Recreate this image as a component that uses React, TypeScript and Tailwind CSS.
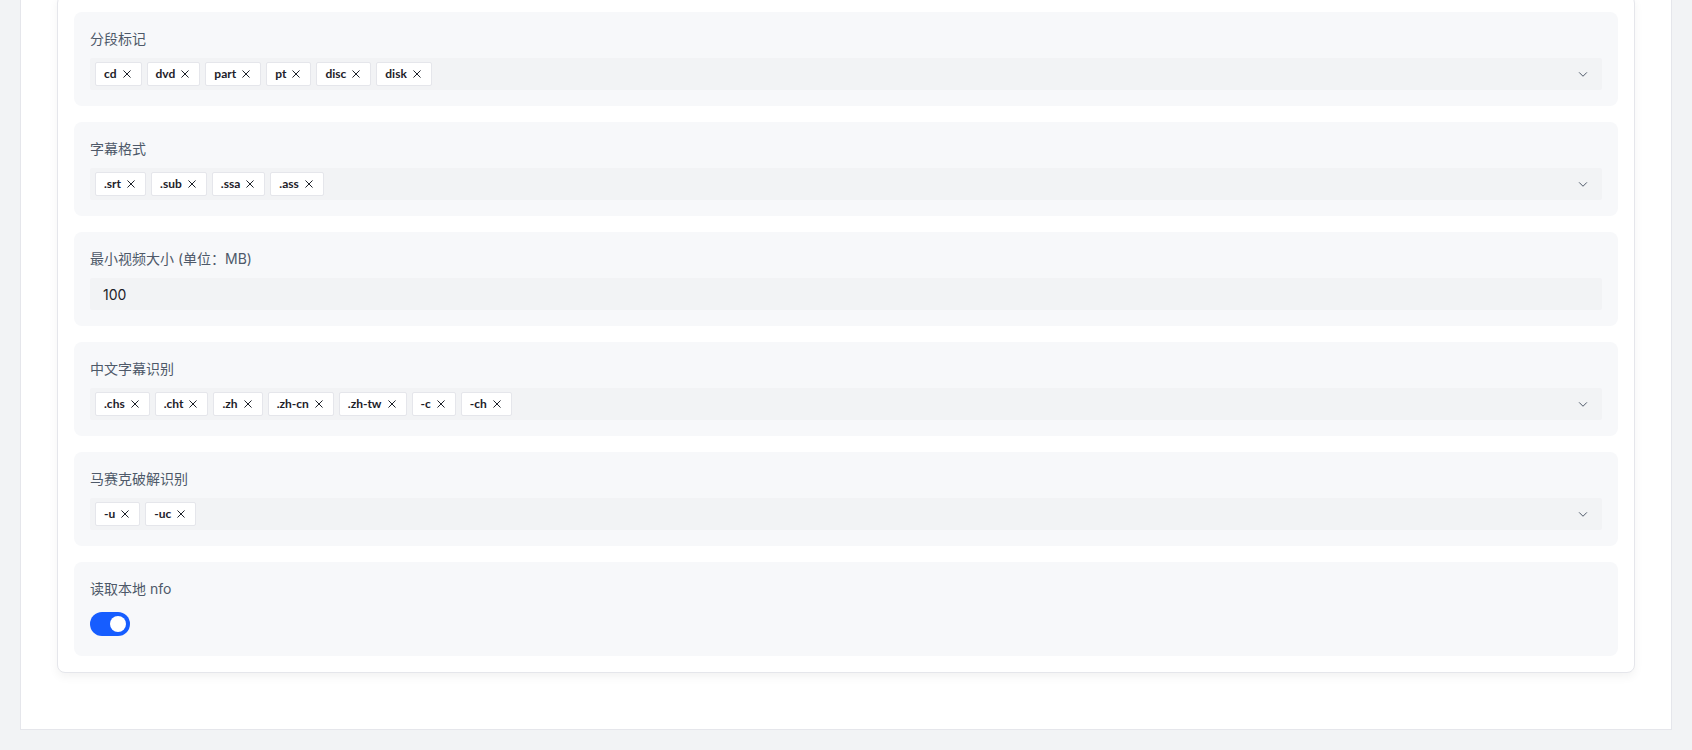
import React from "react";

const FONT = {
  fontFamily:
    '"Inter", "Noto Sans CJK SC", "Noto Sans", "Liberation Sans", sans-serif',
};

const TAG_FONT = {
  fontFamily: '"Lato", "Inter", "Noto Sans CJK SC", sans-serif',
};

function XIcon() {
  return (
    <svg width="12" height="12" viewBox="0 0 48 48" fill="none" stroke="currentColor" strokeWidth="4" strokeLinecap="butt">
      <path d="M9.857 9.858 24 24m0 0 14.142 14.142M24 24 38.142 9.858M24 24 9.857 38.142" />
    </svg>
  );
}

function DownIcon() {
  return (
    <svg width="12" height="12" viewBox="0 0 48 48" fill="none" stroke="currentColor" strokeWidth="4">
      <path d="M39.6 17.443 24.043 33 8.487 17.443" />
    </svg>
  );
}

function Section({ label, children }: { label: string; children: React.ReactNode }) {
  return (
    <div className="rounded-lg bg-[#f7f8fa] px-4 pt-4 pb-4">
      <div className="mb-2 text-[14px] leading-[22px] text-[#4e5969]">{label}</div>
      {children}
    </div>
  );
}

function TagSelect({ tags }: { tags: string[] }) {
  return (
    <div className="flex h-8 items-center justify-between rounded-[2px] bg-[#f2f3f5] pl-[5px] pr-[13px]">
      <div className="flex items-center gap-[5px]">
        {tags.map((t) => (
          <span
            key={t}
            style={TAG_FONT}
            className="flex h-6 items-center gap-1 rounded-[2px] border border-[#e5e6eb] bg-white px-2 text-[12px] font-bold text-[#1d2129]"
          >
            <span className="leading-5">{t}</span>
            <span className="text-[#1d2129]">
              <XIcon />
            </span>
          </span>
        ))}
      </div>
      <span className="text-[#4e5969]">
        <DownIcon />
      </span>
    </div>
  );
}

export default function App() {
  return (
    <div className="min-h-[750px] overflow-hidden bg-[#f2f3f5] px-5 pb-5" style={FONT}>
      <div className="border border-t-0 border-[#e5e6eb] bg-white px-9 pb-[56px]">
        <div className="-mt-[5px] rounded-lg border border-[#e5e6eb] bg-white p-4 shadow-[0_4px_10px_rgba(0,0,0,0.05)]">
          <div className="flex flex-col gap-4">
            <Section label="分段标记">
              <TagSelect tags={["cd", "dvd", "part", "pt", "disc", "disk"]} />
            </Section>
            <Section label="字幕格式">
              <TagSelect tags={[".srt", ".sub", ".ssa", ".ass"]} />
            </Section>
            <Section label="最小视频大小 (单位：MB)">
              <div className="flex h-8 items-center rounded-[2px] bg-[#f2f3f5] px-[13px] text-[14px] text-[#1d2129]">
                100
              </div>
            </Section>
            <Section label="中文字幕识别">
              <TagSelect tags={[".chs", ".cht", ".zh", ".zh-cn", ".zh-tw", "-c", "-ch"]} />
            </Section>
            <Section label="马赛克破解识别">
              <TagSelect tags={["-u", "-uc"]} />
            </Section>
            <Section label="读取本地 nfo">
              <div className="flex h-8 items-center">
                <div className="flex h-6 w-10 items-center justify-end rounded-full bg-[#165dff] pr-1">
                  <div className="h-4 w-4 rounded-full bg-white" />
                </div>
              </div>
            </Section>
          </div>
        </div>
      </div>
    </div>
  );
}
